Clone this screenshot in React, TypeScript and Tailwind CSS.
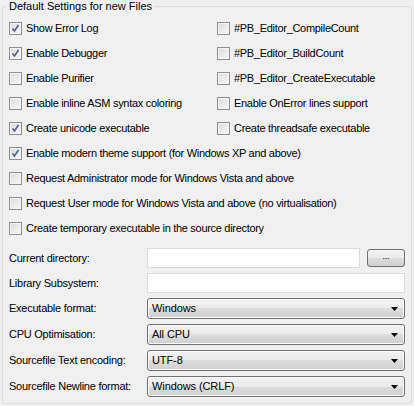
import React from "react";

const leftChecks: [string, boolean][] = [
  ["Show Error Log", true],
  ["Enable Debugger", true],
  ["Enable Purifier", false],
  ["Enable inline ASM syntax coloring", false],
  ["Create unicode executable", true],
];

const rightChecks: [string, boolean][] = [
  ["#PB_Editor_CompileCount", false],
  ["#PB_Editor_BuildCount", false],
  ["#PB_Editor_CreateExecutable", false],
  ["Enable OnError lines support", false],
  ["Create threadsafe executable", false],
];

const wideChecks: [string, boolean][] = [
  ["Enable modern theme support (for Windows XP and above)", true],
  ["Request Administrator mode for Windows Vista and above", false],
  ["Request User mode for Windows Vista and above (no virtualisation)", false],
  ["Create temporary executable in the source directory", false],
];

const combos: [string, string][] = [
  ["Executable format:", "Windows"],
  ["CPU Optimisation:", "All CPU"],
  ["Sourcefile Text encoding:", "UTF-8"],
  ["Sourcefile Newline format:", "Windows (CRLF)"],
];

function CheckBox({ label, checked }: { label: string; checked: boolean }) {
  return (
    <div className="flex h-[25px] items-center">
      <div className="flex h-[13px] w-[13px] shrink-0 items-center justify-center border border-[#8e8f8f] bg-gradient-to-br from-[#dcdcdc] to-[#f8f8f8] shadow-[inset_0_0_0_1px_#f4f4f4]">
        {checked && (
          <svg width="9" height="9" viewBox="0 0 9 9">
            <path d="M1.5 4.5 L3.5 7 L7.5 1" fill="none" stroke="#4a5f97" strokeWidth="1.6" />
          </svg>
        )}
      </div>
      <span className="ml-[4px] whitespace-nowrap tracking-[-0.3px]">{label}</span>
    </div>
  );
}

function Combo({ value }: { value: string }) {
  return (
    <div className="flex h-[21px] flex-1 items-center rounded-[3px] border border-[#707070] bg-[linear-gradient(#f2f2f2_0%,#ebebeb_50%,#dddddd_50%,#cfcfcf_100%)] pl-[4px] pr-[6px] shadow-[inset_0_0_0_1px_#fcfcfc]">
      <span className="flex-1 tracking-[-0.1px]">{value}</span>
      <svg width="7" height="4" viewBox="0 0 7 4">
        <path d="M0 0 H7 L3.5 4 Z" fill="#000" />
      </svg>
    </div>
  );
}

export default function App() {
  return (
    <div className="h-[406px] w-[414px] bg-[#f0f0f0] text-[11px] leading-[13px] text-black" style={{ fontFamily: '"Liberation Sans", Arial, sans-serif' }}>
      <fieldset className="ml-[2px] h-[404px] w-[410px] rounded-[3px] border border-[#d5dfe5] px-[6px] pb-[6px] pt-[3px]">
        <legend className="-ml-[2px] px-[2px]">Default Settings for new Files</legend>

        {/* CHECKBOXES */}
        <div className="flex">
          <div className="w-[208px]">
            {leftChecks.map(([l, c]) => (
              <CheckBox key={l} label={l} checked={c} />
            ))}
          </div>
          <div>
            {rightChecks.map(([l, c]) => (
              <CheckBox key={l} label={l} checked={c} />
            ))}
          </div>
        </div>
        {wideChecks.map(([l, c]) => (
          <CheckBox key={l} label={l} checked={c} />
        ))}

        {/* FORM */}
        <div className="mt-[7px] flex flex-col gap-[5px] tracking-[-0.25px]">
          <div className="flex h-[20px] items-center">
            <span className="w-[138px]">Current directory:</span>
            <div className="h-[20px] flex-1 border border-[#d9dde2] bg-white" />
            <div className="ml-[7px] flex h-[18px] w-[38px] items-center justify-center rounded-[3px] border border-[#707070] bg-[linear-gradient(#f2f2f2_0%,#ebebeb_50%,#dddddd_50%,#cfcfcf_100%)] pb-[3px] text-[9px]">
              ...
            </div>
          </div>
          <div className="flex h-[20px] items-center">
            <span className="w-[138px]">Library Subsystem:</span>
            <div className="h-[20px] flex-1 border border-[#d9dde2] bg-white" />
          </div>
          {combos.map(([l, v]) => (
            <div key={l} className="flex h-[21px] items-center">
              <span className="w-[138px]">{l}</span>
              <Combo value={v} />
            </div>
          ))}
        </div>
      </fieldset>
    </div>
  );
}
